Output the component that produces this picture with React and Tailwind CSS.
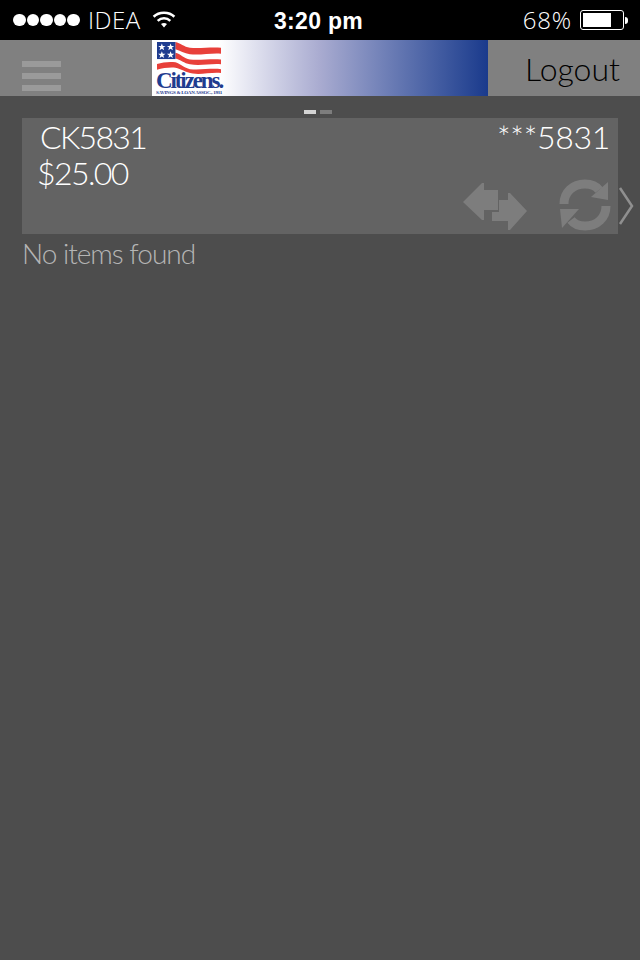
const gill = "font-['Lato','Open_Sans',sans-serif] font-light"

function StatusBar() {
  return (
    <div className="h-10 bg-black text-white flex items-center justify-between pl-[13px] pr-[12px] font-['Open_Sans',sans-serif] relative">
      <div className="flex items-center">
        <div className="flex gap-[1px]">
          {[0, 1, 2, 3, 4].map((i) => (
            <span key={i} className="w-[12.600px] h-[12.600px] rounded-full bg-white" />
          ))}
        </div>
        <span className="ml-[8px] text-[24px] leading-none font-light tracking-[0.5px]">IDEA</span>
        <svg className="ml-[11px] -mt-[2px]" width="24" height="18" viewBox="0 0 26 20" fill="none" stroke="white" strokeWidth="2.8">
          <path d="M1.5 7.5C7.5 1.5 18.5 1.5 24.5 7.5" />
          <path d="M6 12C10 8.3 16 8.3 20 12" />
          <path d="M13 19.5L9.7 15.5C11.5 14 14.5 14 16.3 15.5Z" fill="white" stroke="none" />
        </svg>
      </div>
      <span className="absolute left-[274px] top-[8px] text-[23px] leading-[26px] font-semibold tracking-[0.3px] font-['Liberation_Sans',sans-serif]">3:20 pm</span>
      <div className="flex items-center">
        <span className="text-[24px] leading-none font-light tracking-[0.8px]">68%</span>
        <div className="ml-[8px] w-[44px] h-[20px] border border-white rounded-[3px] p-[2px]">
          <div className="w-[28px] h-full bg-white" />
        </div>
        <div className="ml-[1px] w-[3px] h-[7px] bg-white rounded-r-sm" />
      </div>
    </div>
  )
}

function CitizensLogo() {
  return (
    <div className="w-[336px] h-14 bg-gradient-to-r from-white from-[20%] via-[#a9abd0] via-[50%] to-[#1a3a8c] shrink-0 pl-[4px] flex flex-col overflow-hidden">
      <svg className="shrink-0 mt-[2px]" width="66" height="32" viewBox="0 0 66 33">
        <path d="M19 0C24 1 28 5 34 6C44 7 56 5 66 6V12C56 11 44 14 34 12.600C28 12 24 9 19 7.600Z" fill="#e8403a" />
        <path d="M19 11C24 12 28 17 34 18C44 19 56 17 66 18V23C56 22 44 25 34 23C28 22 24 18 19 17Z" fill="#e8403a" />
        <path d="M0 22.600C6 21 13 20 19 21C25 23 28 27 34 28C44 29 56 27 66 28V32C56 31 46 34 37 32.600C29 31 25 28 19 26.600C13 26 6 27 0 28.600Z" fill="#e8403a" />
        <rect x="0" y="0" width="19" height="17.600" fill="#1f3c8f" />
        <g fill="white">
          <path d="M5 1.500L6 4.200H8.800L6.500 5.800L7.400 8.500L5 6.900L2.600 8.500L3.500 5.800L1.200 4.200H4Z" />
          <path d="M14 1.500L15 4.200H17.800L15.500 5.800L16.400 8.500L14 6.900L11.600 8.500L12.500 5.800L10.200 4.200H13Z" />
          <path d="M5 9.500L6 12.200H8.800L6.500 13.800L7.400 16.500L5 14.900L2.600 16.500L3.500 13.800L1.200 12.200H4Z" />
          <path d="M14 9.500L15 12.200H17.800L15.500 13.800L16.400 16.500L14 14.900L11.600 16.500L12.500 13.800L10.200 12.200H13Z" />
        </g>
      </svg>
      <span className="h-[16px] w-[68px] font-['Liberation_Serif',serif] font-bold text-[23px] leading-[16px] tracking-[-2.1px] text-[#1f3c8f] -mt-[1px] whitespace-nowrap">Citizens.</span>
      <span className="w-[68px] font-['Liberation_Serif',serif] font-bold text-[5px] leading-[5px] tracking-[-0.3px] text-[#1f3c8f] whitespace-nowrap mt-[1px]">SAVINGS &amp; LOAN ASSOC., 1931</span>
    </div>
  )
}

function Header() {
  return (
    <div className="h-14 bg-[#808080] flex">
      <div className="w-[152px] pl-[22px] pt-[21px] flex flex-col gap-[6px]">
        <div className="w-[39px] h-[6px] bg-[#9a9a9a]" />
        <div className="w-[39px] h-[6px] bg-[#9a9a9a]" />
        <div className="w-[39px] h-[6px] bg-[#9a9a9a]" />
      </div>
      <CitizensLogo />
      <div className={`flex-1 flex justify-end pr-[20px] pt-[8px] text-[32px] leading-[42px] text-black ${gill}`}>Logout</div>
    </div>
  )
}

function TransferIcon() {
  return (
    <svg width="64" height="47" viewBox="0 0 64 47" fill="#7d7d7d">
      <path d="M0 19L19 0H21V7H35V27H21V37H19Z" />
      <path d="M36 17H45V10L47 10L64 28L47 47H45V38H29V29H36Z" />
    </svg>
  )
}

function RefreshIcon() {
  return (
    <svg width="54" height="54" viewBox="0 0 54 54" fill="none">
      <path d="M6 26C6 14 15 6 27 6C33 6 38 8 41 12" stroke="#7d7d7d" strokeWidth="9" />
      <path d="M33 19L50 4V22Z" fill="#7d7d7d" />
      <path d="M48 28C48 40 39 48 27 48C21 48 16 46 13 42" stroke="#7d7d7d" strokeWidth="9" />
      <path d="M2 31H21L4 50Z" fill="#7d7d7d" />
    </svg>
  )
}

function AccountCard() {
  return (
    <div className="ml-[22px] w-[612px] flex items-end">
      <div className={`w-[596px] h-[116px] bg-[#636363] relative text-white ${gill}`}>
        <div className="flex justify-between pl-[18px] pr-[8px] text-[32px] leading-[38px]">
          <span className="tracking-[-1.7px]">CK5831</span>
          <span className="tracking-[-0.3px]">***5831</span>
        </div>
        <div className="pl-[15px] -mt-[2px] text-[32px] leading-[38px] tracking-[-1.6px]">$25.00</div>
        <div className="absolute right-[6px] bottom-[2px] flex items-end gap-[31px]">
          <div className="mb-[2px]">
            <TransferIcon />
          </div>
          <RefreshIcon />
        </div>
      </div>
      <svg className="mb-[9px]" width="16" height="38" viewBox="0 0 16 38" fill="none" stroke="#8f8f8f" strokeWidth="2.500">
        <path d="M2 1L14 19L2 37" />
      </svg>
    </div>
  )
}

export default function App() {
  return (
    <div className="w-[640px] h-[960px] bg-[#4d4d4d] overflow-hidden">
      <StatusBar />
      <Header />
      <div className="flex justify-center gap-[4px] pt-[14px] pb-[4px] ml-[-4px]">
        <span className="w-[12px] h-[4px] bg-[#d4d4d4]" />
        <span className="w-[12px] h-[4px] bg-[#7d7d7d]" />
      </div>
      <AccountCard />
      <div className={`ml-[22px] mt-[2px] text-[28px] leading-[34px] tracking-[-1px] text-[#b5b5b5] ${gill}`}>No items found</div>
    </div>
  )
}
